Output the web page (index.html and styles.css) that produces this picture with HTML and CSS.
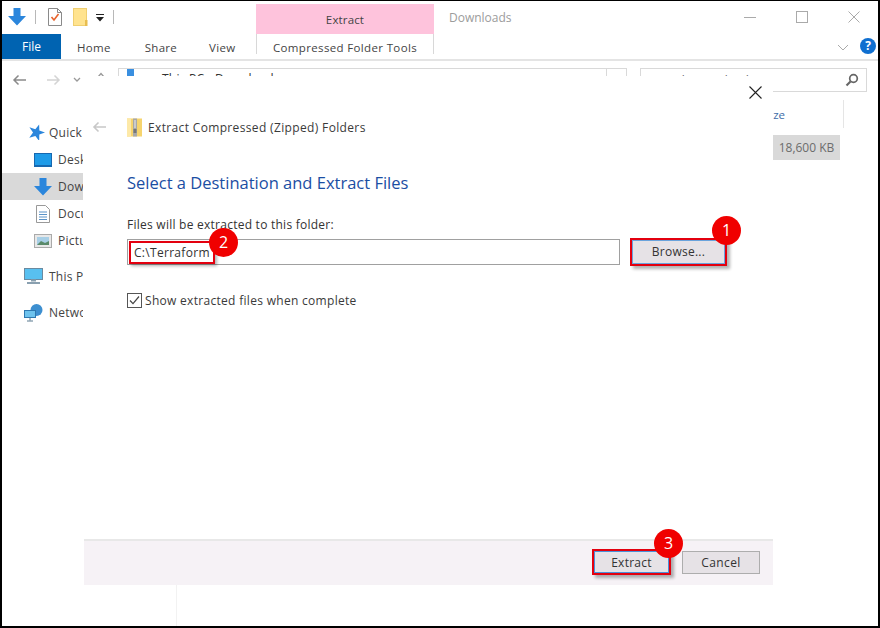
FILE: index.html
```html
<!DOCTYPE html>
<html lang="en">
<head>
<meta charset="utf-8">
<title>Extract Compressed (Zipped) Folders</title>
<link rel="stylesheet" href="styles.css">
</head>
<body>
<div class="frame">
  <header class="titlebar">
    <div class="qat">
      <svg class="qat-arrow" width="18" height="18" viewBox="0 0 18 18"><path d="M5.500 0h7v8H18l-9 9.500L0 8h5.500z" fill="#2b86dc"/></svg>
      <span class="qat-sep"></span>
      <svg class="qat-doc" width="14" height="18" viewBox="0 0 14 18"><path d="M.5.500h9l4 4v13H.5zM9.500.500v4h4" fill="#fff" stroke="#8a8a8a"/><path d="M3.500 9l2.500 3L10.500 6" fill="none" stroke="#e8632c" stroke-width="1.600"/></svg>
      <svg class="qat-folder" width="15" height="18" viewBox="0 0 15 18"><rect x="0.500" y="0.500" width="13" height="17" fill="#ffe38f" stroke="#f0cf70"/><rect x="12" y="12" width="2.500" height="6" fill="#e8bd4f"/></svg>
      <svg class="qat-drop" width="8" height="8" viewBox="0 0 8 8"><path d="M0 0h8v1H0zM0 3h8L4 7.500z" fill="#222"/></svg>
      <span class="qat-sep"></span>
    </div>
    <div class="context-tab">Extract</div>
    <div class="window-title">Downloads</div>
    <div class="controls">
      <svg width="12" height="12" viewBox="0 0 12 12"><path d="M0 6.500h12" stroke="#aaa"/></svg>
      <svg width="12" height="12" viewBox="0 0 12 12"><rect x="0.500" y="0.500" width="11" height="11" fill="none" stroke="#aaa"/></svg>
      <svg width="12" height="12" viewBox="0 0 12 12"><path d="M.5.500l11 11M11.500.500l-11 11" stroke="#aaa" fill="none"/></svg>
    </div>
  </header>

  <nav class="ribbon">
    <div class="ribbon-left">
      <div class="file-tab">File</div>
      <div class="tab tab-home">Home</div>
      <div class="tab tab-share">Share</div>
      <div class="tab tab-view">View</div>
    </div>
    <div class="tab-tools">Compressed Folder Tools</div>
    <svg class="ribbon-chevron" width="12" height="7" viewBox="0 0 12 7"><path d="M1 1l5 5 5-5" fill="none" stroke="#aaa"/></svg>
    <div class="help">?</div>
  </nav>

  <div class="addressbar">
    <div class="nav-buttons">
      <svg width="15" height="12" viewBox="0 0 15 12"><path d="M14 6H2M6.500 1.500L2 6l4.500 4.500" fill="none" stroke="#8a8a8a" stroke-width="1.500"/></svg>
      <svg width="15" height="12" viewBox="0 0 15 12"><path d="M1 6h12M8.500 1.500L13 6l-4.500 4.500" fill="none" stroke="#d4d4d4" stroke-width="1.500"/></svg>
      <svg width="8" height="6" viewBox="0 0 8 6"><path d="M1 1l3 3 3-3" fill="none" stroke="#999" stroke-width="1.300"/></svg>
      <svg class="nav-up" width="8" height="6" viewBox="0 0 8 6"><path d="M1 5l3-3.500L7 5" fill="none" stroke="#999" stroke-width="1.300"/></svg>
    </div>
    <div class="address"><span class="address-folder"></span><span class="address-text">This PC › Downloads</span><span class="address-drop"></span></div>
    <div class="search">
      <span>Search Downloads</span>
      <svg width="14" height="14" viewBox="0 0 14 14"><circle cx="8.500" cy="5.500" r="3.800" fill="none" stroke="#666" stroke-width="1.700"/><path d="M5.500 8.500L1.500 12.500" stroke="#666" stroke-width="2.200"/></svg>
    </div>
  </div>

  <div class="explorer">
    <aside class="sidebar">
      <div class="side-item side-quick">
        <svg width="17" height="16" viewBox="0 0 17 16"><path transform="rotate(18 8.500 8.500)" d="M8.500 0l2.100 5.800h6.200l-5 3.800 1.900 6.200-5.200-3.700-5.200 3.700 1.900-6.200-5-3.800h6.200z" fill="#2b86dc"/></svg>
        <span>Quick access</span>
      </div>
      <div class="side-item side-sub">
        <svg width="18" height="14" viewBox="0 0 18 14"><rect x="0.500" y="0.500" width="17" height="12" fill="#1e9be8" stroke="#1668b0"/><path d="M0 13.500h18" stroke="#1668b0"/></svg>
        <span>Desktop</span>
      </div>
      <div class="side-item side-sub side-active">
        <svg width="18" height="18" viewBox="0 0 18 18"><path d="M5.500 0h7v8H18l-9 9.500L0 8h5.500z" fill="#2b86dc"/></svg>
        <span>Downloads</span>
      </div>
      <div class="side-item side-sub">
        <svg class="side-narrow" width="14" height="18" viewBox="0 0 14 18"><path d="M.5.500h9l4 4v13H.5z" fill="#fff" stroke="#999"/><path d="M3 7h8M3 9.500h8M3 12h8M3 14.500h8" stroke="#5a93c8"/></svg>
        <span>Documents</span>
      </div>
      <div class="side-item side-sub">
        <svg width="18" height="14" viewBox="0 0 18 14"><rect x="0.500" y="0.500" width="17" height="13" fill="#e8e8e8" stroke="#aaa"/><rect x="3" y="3" width="12" height="8" fill="#a8cfe6"/><path d="M3 11l4-4 4 2 4-2v4z" fill="#5a8a6a"/></svg>
        <span>Pictures</span>
      </div>
      <div class="side-item side-pc">
        <svg width="19" height="18" viewBox="0 0 19 18"><rect x="0.500" y="0.500" width="18" height="11" fill="#58c0f0" stroke="#6a8aa0"/><path d="M7 12.500h5M3 15h13" stroke="#8aa0b0" stroke-width="2"/></svg>
        <span>This PC</span>
      </div>
      <div class="side-item side-net">
        <svg width="19" height="18" viewBox="0 0 19 18"><circle cx="12.500" cy="6" r="6" fill="#3d8fd0"/><rect x="0.500" y="6.500" width="11" height="7" fill="#6ec3ee" stroke="#2f78b0"/><path d="M6 13.500v3M3 17h6" stroke="#5a7a90"/></svg>
        <span>Network</span>
      </div>
    </aside>
    <div class="listing">
      <div class="list-head"><span>Size</span></div>
      <div class="list-cell">18,600 KB</div>
    </div>
  </div>

  <div class="vline"></div>

  <section class="dialog">
    <svg class="dialog-close" width="13" height="13" viewBox="0 0 13 13"><path d="M.5.500l12 12M12.500.500l-12 12" stroke="#222" fill="none" stroke-width="1.100"/></svg>
    <div class="dialog-main">
      <div class="dialog-head">
        <svg class="dialog-back" width="15" height="12" viewBox="0 0 15 12"><path d="M14 6H2M6.500 1.500L2 6l4.500 4.500" fill="none" stroke="#c8c8c8" stroke-width="1.600"/></svg>
        <svg class="zip-icon" width="15" height="19" viewBox="0 0 15 19"><rect x="0" y="0.500" width="15" height="18" fill="#f6d46e"/><rect x="0" y="0.500" width="4" height="18" fill="#fde9a8"/><rect x="6" y="0.500" width="4" height="18" fill="#a8a8a8"/><path d="M7 3h2M7 5h2M7 7h2M7 9h2" stroke="#eee"/><rect x="6.500" y="11" width="3" height="4" fill="#777"/></svg>
        <span>Extract Compressed (Zipped) Folders</span>
      </div>
      <h1 class="dialog-title">Select a Destination and Extract Files</h1>
      <label class="field-label">Files will be extracted to this folder:</label>
      <div class="field-row">
        <div class="path-input">
          <span class="path-mark">C:\Terraform</span>
          <span class="badge badge-2">2</span>
        </div>
        <div class="browse-wrap">
          <button class="btn btn-browse">Browse...</button>
          <span class="badge badge-1">1</span>
        </div>
      </div>
      <div class="check-row">
        <svg width="15" height="15" viewBox="0 0 15 15"><rect x="0.500" y="0.500" width="14" height="14" fill="#fff" stroke="#555"/><path d="M3 7.500l3 3.200L12 3.500" fill="none" stroke="#444" stroke-width="1.200"/></svg>
        <span>Show extracted files when complete</span>
      </div>
    </div>
    <footer class="dialog-foot">
      <div class="extract-wrap">
        <button class="btn btn-extract">Extract</button>
        <span class="badge badge-3">3</span>
      </div>
      <button class="btn btn-cancel">Cancel</button>
    </footer>
  </section>
</div>
</body>
</html>
```
FILE: styles.css
```css
* { box-sizing: border-box; }
html, body { margin: 0; padding: 0; background: #fff; }
body { font-family: "Open Sans", "Noto Sans", sans-serif; font-size: 12px; color: #333; }
svg { display: block; flex: none; }

.frame {
  position: relative;
  width: 880px;
  height: 628px;
  border: 2px solid #000;
  border-top-width: 1px;
  overflow: hidden;
  background: #fff;
}

/* title bar */
.titlebar { display: flex; height: 33px; position: relative; }
.qat { display: flex; align-items: flex-start; width: 254px; padding: 7px 0 0 6px; }
.qat-sep { width: 1px; height: 14px; margin-top: 2px; background: #b8b8b8; }
.qat-arrow { margin-right: 9px; }
.qat-doc { margin: 0 11px 0 12px; }
.qat-folder { margin-right: 8px; }
.qat-drop { margin: 6px 9px 0 0; }
.context-tab {
  width: 178px;
  margin-top: 3px;
  background: #fec3dc;
  text-align: center;
  line-height: 31px;
  color: #444;
  font-size: 11.500px;
  letter-spacing: .15px;
}
.window-title { margin-left: 15px; line-height: 34px; color: #9c9c9c; font-size: 12px; }
.controls { margin-left: auto; display: flex; gap: 40px; padding: 10px 18px 0 0; }

/* ribbon */
.ribbon { display: flex; height: 27px; border-bottom: 2px solid #e4e4e4; position: relative; }
.ribbon-left { display: flex; width: 254px; }
.file-tab { width: 59px; background: #0063b1; color: #fff; text-align: center; line-height: 26px; font-size: 12px; }
.tab { line-height: 27px; font-size: 11.500px; color: #444; letter-spacing: .3px; }
.tab-home { margin-left: 16px; }
.tab-share { margin-left: 34px; }
.tab-view { margin-left: 32px; }
.tab-tools {
  width: 178px;
  height: 20px;
  border-left: 1px solid #d8d8d8;
  border-right: 1px solid #d8d8d8;
  text-align: center;
  line-height: 27px;
  font-size: 11.500px;
  color: #444;
  letter-spacing: .35px;
}
.ribbon-chevron { margin: 10px 0 0 auto; }
.help {
  width: 16px;
  height: 16px;
  margin: 4px 2px 0 11px;
  border-radius: 50%;
  background: #0f6fd0;
  color: #fff;
  font-weight: 700;
  font-size: 12px;
  line-height: 16px;
  text-align: center;
}

/* address bar */
.addressbar { display: flex; align-items: flex-start; padding-top: 7px; height: 40px; }
.nav-buttons { display: flex; align-items: center; width: 116px; height: 24px; padding-left: 10px; }
.nav-buttons svg:nth-child(2) { margin-left: 19px; }
.nav-buttons svg:nth-child(3) { margin-left: 12px; }
.nav-buttons svg:nth-child(4) { margin-left: 16px; margin-top: -10px; }
.address {
  display: flex;
  width: 509px;
  height: 24px;
  border: 1px solid #d9d9d9;
  padding: 0 0 0 8px;
  line-height: 20px;
}
.address-folder { width: 7px; height: 8px; background: #3a8fe0; }
.address-text { margin-left: 28px; color: #333; letter-spacing: .25px; }
.address-drop { margin-left: auto; width: 20px; border-left: 1px solid #d9d9d9; }
.search {
  display: flex;
  justify-content: space-between;
  align-items: center;
  width: 227px;
  height: 24px;
  margin-left: 13px;
  border: 1px solid #d9d9d9;
  padding: 0 7px 0 10px;
  color: #666;
}

/* explorer behind dialog */
.explorer { display: flex; justify-content: space-between; }
.sidebar { width: 81px; overflow: hidden; padding-top: 17px; color: #444; letter-spacing: .25px; }
.side-item { display: flex; align-items: center; white-space: nowrap; height: 27px; }
.side-quick { padding-left: 26px; gap: 4px; height: 28px; }
.side-sub { padding-left: 32px; gap: 6px; height: 27px; }
.side-narrow { margin: 0 2px; }
.side-active { background: #d9d9d9; }
.side-pc { padding-left: 22px; gap: 6px; margin-top: 9px; }
.side-net { padding-left: 22px; gap: 6px; margin-top: 9px; }
.listing { width: 105px; margin: -1px 34px 0 0; }
.list-head {
  height: 28px;
  border-right: 1px solid #e5e5e5;
  text-align: right;
  padding-right: 58px;
  line-height: 16px;
  padding-top: 7px;
  color: #3e6ca8;
  font-size: 11.500px;
}
.list-cell {
  width: 67px;
  height: 25px;
  margin: 7px 0 0 34px;
  background: #d9d9d9;
  color: #6c6c6c;
  text-align: center;
  line-height: 25px;
}
.vline { position: absolute; left: 174px; top: 584px; width: 1px; height: 42px; background: #f2f2f2; }

/* dialog */
.dialog {
  position: absolute;
  left: 82px;
  top: 75px;
  width: 689px;
  height: 509px;
  background: #fff;
  display: flex;
  flex-direction: column;
}
.dialog-close { position: absolute; right: 11px; top: 10px; }
.dialog-main { flex: 1; padding: 41px 0 0 43px; }
.dialog-head { display: flex; align-items: center; height: 20px; margin-left: -35px; color: #3a3a3a; }
.dialog-back { margin-right: 20px; }
.zip-icon { margin-right: 6px; }
.dialog-head span { font-size: 12px; letter-spacing: .35px; }
.dialog-title {
  margin: 35px 0 0;
  font-size: 16.500px;
  font-weight: 400;
  line-height: 22px;
  color: #1b4ea3;
}
.field-label { display: block; margin-top: 23px; line-height: 16px; font-size: 12px; color: #333; letter-spacing: .25px; }
.field-row { display: flex; margin-top: 6px; }
.path-input {
  position: relative;
  width: 493px;
  height: 26px;
  border: 1px solid #a0a0a0;
  display: flex;
  align-items: center;
}
.path-mark {
  margin-left: 1px;
  width: 86px;
  padding-left: 3px;
  height: 23px;
  line-height: 20px;
  border: 2px solid #e3000f;
  box-shadow: 2px 2px 3px rgba(0,0,0,.3);
  font-size: 12px;
  color: #333;
  white-space: nowrap;
  letter-spacing: .3px;
}
.browse-wrap { position: relative; margin-left: 10px; }
.btn {
  font-family: inherit;
  font-size: 12px;
  color: #333;
  background: #e6e2e6;
  padding: 0;
  display: block;
  letter-spacing: .25px;
}
.btn-browse {
  width: 97px;
  height: 28px;
  margin-top: -1px;
  padding-bottom: 2px;
  border: 2px solid #e3000f;
  box-shadow: inset 0 0 0 1px #6aa3dc, 3px 3px 3px rgba(0,0,0,.3);
}
.badge {
  position: absolute;
  width: 29px;
  height: 29px;
  border-radius: 50%;
  background: #f00000;
  color: #fff;
  text-align: center;
  font-size: 16px;
  line-height: 29px;
}
.badge-1 { left: 82px; top: -23px; }
.badge-2 { left: 81px; top: -12px; }
.badge-3 { left: 62px; top: -20px; }
.check-row { display: flex; align-items: center; gap: 3px; margin-top: 26px; height: 16px; color: #3a3a3a; font-size: 12px; letter-spacing: .3px; }
.dialog-foot {
  height: 46px;
  display: flex;
  background: #f6f2f6;
  border-top: 2px solid #e8e8e8;
  padding: 8px 13px 0 508px;
}
.extract-wrap { position: relative; }
.btn-extract {
  width: 79px;
  height: 26px;
  border: 2px solid #e3000f;
  box-shadow: inset 0 0 0 1px #4a90d9, 3px 3px 3px rgba(0,0,0,.3);
}
.btn-cancel {
  width: 78px;
  height: 23px;
  margin: 2px 0 0 11px;
  border: 1px solid #adadad;
  letter-spacing: .4px;
}
```
